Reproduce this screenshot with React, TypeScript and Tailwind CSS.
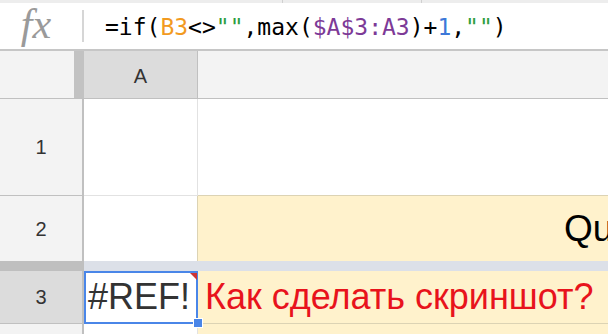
import React from "react";

const mono = { fontFamily: '"DejaVu Sans Mono", monospace' };

function FormulaBar() {
  return (
    <div className="flex h-[46px] items-center bg-white">
      <div className="flex w-[82px] items-center justify-center">
        <span className="font-['Liberation_Serif',serif] text-[42px] italic leading-none text-[#9a9a9a] pr-[10px] pb-[4px]">
          fx
        </span>
      </div>
      <div className="h-[32px] w-[2px] bg-[#d6d6d6]" />
      <div className="pl-[21px] pt-[2px] text-[23px] leading-none text-black whitespace-nowrap" style={mono}>
        =if(<span className="text-[#f29a1f]">B3</span>&lt;&gt;
        <span className="text-[#2f9e3f]">""</span>,max(
        <span className="text-[#7d3a97]">$A$3:A3</span>)+
        <span className="text-[#3c78d8]">1</span>,
        <span className="text-[#2f9e3f]">""</span>)
      </div>
    </div>
  );
}

export default function App() {
  return (
    <div className="h-[334px] w-[608px] overflow-hidden bg-white font-['Liberation_Sans',Arial,sans-serif]">
      {/* top toolbar edge */}
      <div className="flex h-[3px] bg-[#ededed]">
        <div className="w-[283px] border-r border-[#d0d0d0]" />
        <div className="w-[139px] border-r border-[#d0d0d0]" />
      </div>

      <FormulaBar />
      <div className="h-[2px] bg-[#c6c6c6]" />

      {/* column headers */}
      <div className="flex h-[48px] border-b border-[#c0c0c0] bg-[#f3f3f3]">
        <div className="w-[74px]" />
        <div className="w-[10px] bg-[#c2c2c2]" />
        <div className="flex w-[114px] items-center justify-center border-r border-[#c0c0c0] bg-[#dcdcdc] pt-[2px] text-[20px] text-[#333]">
          A
        </div>
        <div className="flex-1" />
      </div>

      {/* row 1 */}
      <div className="flex h-[97px]">
        <div className="flex w-[84px] items-center justify-center border-r-2 border-b border-[#c0c0c0] bg-[#f3f3f3] text-[20px] text-[#333]">
          1
        </div>
        <div className="w-[114px] border-r border-b border-[#e2e2e2]" />
        <div className="flex-1 border-b border-[#dcd3b4]" />
      </div>

      {/* row 2 */}
      <div className="flex h-[65px]">
        <div className="flex w-[84px] items-center justify-center border-r-2 border-[#c0c0c0] bg-[#f3f3f3] text-[20px] text-[#333]">
          2
        </div>
        <div className="w-[113px] bg-white" />
        <div className="flex flex-1 items-center overflow-hidden whitespace-nowrap border-l border-[#dcd3b4] bg-[#fff2cc] pl-[366px] text-[37px] text-black">
          Question
        </div>
      </div>

      {/* frozen rows divider */}
      <div className="flex h-[10px]">
        <div className="w-[84px] bg-[#bfbfbf]" />
        <div className="flex-1 bg-[#dce0e8]" />
      </div>

      {/* row 3 */}
      <div className="flex h-[53px]">
        <div className="flex w-[84px] items-center justify-center border-r-2 border-b border-[#c0c0c0] bg-[#dcdcdc] text-[20px] text-[#333]">
          3
        </div>
        <div className="relative flex w-[114px] items-center border-r border-b border-[#e2e2e2] bg-white pl-[4px] text-[36px] text-[#333]">
          #REF!
          <div className="pointer-events-none absolute -bottom-px -right-px left-0 top-0 border-2 border-[#4a86e8]" />
          <div className="absolute right-0 top-[2px] h-0 w-0 border-l-[7px] border-t-[7px] border-l-transparent border-t-[#cc3333]" />
          <div className="absolute -bottom-[5px] -right-[6px] h-[10px] w-[10px] border border-white bg-[#4a86e8]" />
        </div>
        <div className="flex flex-1 items-center whitespace-nowrap border-b border-[#dcd3b4] bg-[#fff2cc] pl-[7px] text-[36px] text-[#e8131c]">
          Как сделать скриншот?
        </div>
      </div>

      {/* row 4 */}
      <div className="flex h-[20px]">
        <div className="w-[84px] border-r-2 border-[#c0c0c0] bg-[#f3f3f3]" />
        <div className="w-[114px] border-r border-[#e2e2e2]" />
        <div className="flex-1 bg-[#fff2cc]" />
      </div>
    </div>
  );
}
